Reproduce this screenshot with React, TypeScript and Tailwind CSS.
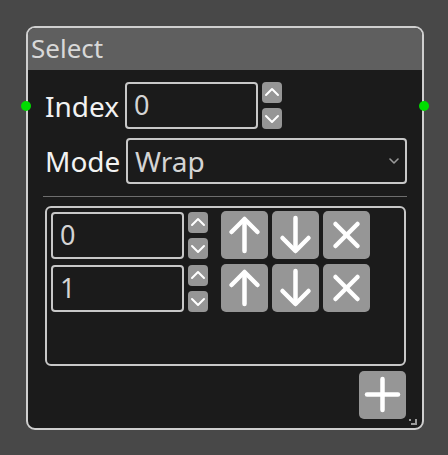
import React from "react";

const font = { fontFamily: '"Noto Sans", "Open Sans", sans-serif' };

function Chevron({ up }: { up?: boolean }) {
  return (
    <svg width="20" height="21" viewBox="0 0 20 21" fill="none">
      <polyline
        points={up ? "4,13 10,7 16,13" : "4,8 10,14 16,8"}
        stroke="white"
        strokeWidth="2"
        strokeLinecap="round"
        strokeLinejoin="round"
      />
    </svg>
  );
}

function Spinner() {
  return (
    <div className="flex flex-col gap-[5px]">
      <div className="w-[20px] h-[21px] rounded-[4px] bg-[#969696] flex items-center justify-center">
        <Chevron up />
      </div>
      <div className="w-[20px] h-[21px] rounded-[4px] bg-[#969696] flex items-center justify-center">
        <Chevron />
      </div>
    </div>
  );
}

function IconButton({ kind }: { kind: "up" | "down" | "x" | "plus" }) {
  return (
    <div className="w-[47px] h-[48px] rounded-[5px] bg-[#969696] flex items-center justify-center">
      <svg width="47" height="48" viewBox="0 0 47 48" fill="none" stroke="white" strokeWidth="4.5" strokeLinecap="round" strokeLinejoin="round">
        {kind === "up" && (
          <>
            <line x1="23.5" y1="9" x2="23.5" y2="40" />
            <polyline points="10.5,21 23.5,8 36.5,21" />
          </>
        )}
        {kind === "down" && (
          <>
            <line x1="23.5" y1="7" x2="23.5" y2="39" />
            <polyline points="10.5,27 23.5,40 36.5,27" />
          </>
        )}
        {kind === "x" && (
          <>
            <line x1="12.5" y1="13" x2="34.5" y2="35" />
            <line x1="34.5" y1="13" x2="12.5" y2="35" />
          </>
        )}
        {kind === "plus" && (
          <>
            <line x1="8" y1="23.5" x2="39" y2="23.5" />
            <line x1="23.5" y1="8" x2="23.5" y2="39" />
          </>
        )}
      </svg>
    </div>
  );
}

function NumberBox({ value }: { value: string }) {
  return (
    <div className="w-[133px] h-[47px] border-2 border-[#c8c8c8] rounded-[4px] flex items-center pl-[7px] text-[27px] text-[#d4d4d4]">
      {value}
    </div>
  );
}

function ListRow({ value }: { value: string }) {
  return (
    <div className="flex items-center">
      <NumberBox value={value} />
      <div className="ml-[4px]">
        <Spinner />
      </div>
      <div className="ml-[13px] flex gap-[4px]">
        <IconButton kind="up" />
        <IconButton kind="down" />
        <IconButton kind="x" />
      </div>
    </div>
  );
}

export default function App() {
  return (
    <div className="w-[448px] h-[455px] bg-[#484848] pt-[26px] pl-[26px]" style={font}>
      <div className="relative w-[398px] h-[404px] border-2 border-[#cfcfcf] rounded-[9px] bg-[#1b1b1b]">
        {/* ports */}
        <div className="absolute left-[-7px] top-[73px] w-[10px] h-[10px] rounded-full bg-[#00dd00]" />
        <div className="absolute right-[-7px] top-[73px] w-[10px] h-[10px] rounded-full bg-[#00dd00]" />

        <div className="h-[42px] bg-[#5f5f5f] rounded-t-[7px] pl-[3px] text-[26px] leading-[40px] text-[#d8d8d8]">
          Select
        </div>

        <div className="px-[15px]">
          <div className="mt-[12px] flex items-center">
            <span className="w-[82px] pl-[2px] text-[28px] text-[#f2f2f2]">Index</span>
            <NumberBox value="0" />
            <div className="ml-[4px]">
              <Spinner />
            </div>
          </div>

          <div className="mt-[9px] flex items-center">
            <span className="w-[83px] pl-[2px] text-[28px] text-[#f2f2f2]">Mode</span>
            <div className="flex-1 h-[46px] border-2 border-[#c8c8c8] rounded-[4px] flex items-center justify-between pl-[7px] pr-[6px] text-[28px] text-[#d4d4d4]">
              <span>Wrap</span>
              <svg width="10" height="6" viewBox="0 0 10 6" fill="none">
                <polyline points="1,1 5,5 9,1" stroke="#9a9a9a" strokeWidth="1.6" strokeLinecap="round" strokeLinejoin="round" />
              </svg>
            </div>
          </div>

          <div className="mt-[12px] h-px bg-[#6e6e6e]" />

          <div className="mt-[9px] ml-[2px] w-[361px] h-[160px] border-2 border-[#c8c8c8] rounded-[6px] pt-[3px] pl-[4px] flex flex-col gap-[5px]">
            <ListRow value="0" />
            <ListRow value="1" />
          </div>

          <div className="mt-[5px] flex justify-end pr-[1px]">
            <IconButton kind="plus" />
          </div>
        </div>

        {/* resize grip */}
        <div className="absolute right-[5px] bottom-[3px] w-[6px] h-[6px] border-r-2 border-b-2 border-[#9a9a9a]" />
        <div className="absolute right-[11px] bottom-[7px] w-[2px] h-[2px] bg-[#9a9a9a]" />
      </div>
    </div>
  );
}
